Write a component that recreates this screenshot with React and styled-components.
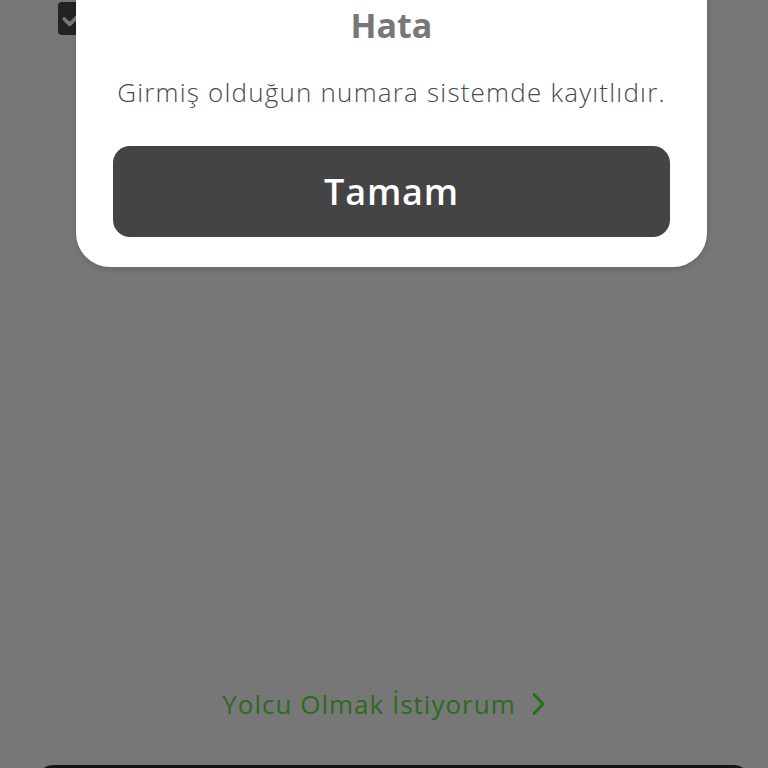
import React from "react";
import styled, { createGlobalStyle } from "styled-components";

const Global = createGlobalStyle`
  html, body { margin: 0; padding: 0; background: #fff; }
  body { font-family: "Open Sans", "Noto Sans", sans-serif; }
  #root { height: 768px; }
`;

const Page = styled.div`
  position: relative;
  width: 768px;
  height: 768px;
  overflow: hidden;
  background: #ffffff;
  display: flex;
  flex-direction: column;
`;

const TopRow = styled.div`
  display: flex;
  padding: 2px 0 0 58px;
`;

const Checkbox = styled.div`
  width: 34px;
  height: 33px;
  border-radius: 4px;
  background: #4a4a4a;
  display: flex;
  align-items: center;
  justify-content: flex-start;
  padding-left: 3px;
  box-sizing: border-box;
`;

const Spacer = styled.div`
  flex: 1;
`;

const LinkRow = styled.div`
  display: flex;
  justify-content: center;
  align-items: center;
  gap: 14px;
  color: #5ae83e;
  font-size: 26px;
  font-weight: 500;
  letter-spacing: 1px;
  margin-bottom: 43px;
`;

const BottomBar = styled.div`
  margin: 0 18px 0 37px;
  height: 40px;
  margin-bottom: -37px;
  border-radius: 16px;
  background: #2c2c2c;
`;

const Overlay = styled.div`
  position: absolute;
  inset: 0;
  background: rgba(0, 0, 0, 0.533);
`;

const Modal = styled.div`
  position: absolute;
  left: 76px;
  top: -32px;
  width: 631px;
  box-sizing: border-box;
  padding: 37px 37px 30px 37px;
  background: #ffffff;
  border-radius: 34px;
  box-shadow: 0 2px 6px rgba(0, 0, 0, 0.15);
  display: flex;
  flex-direction: column;
  align-items: center;
`;

const Title = styled.div`
  font-size: 34px;
  line-height: 41px;
  font-weight: 700;
  color: #777777;
`;

const Message = styled.div`
  margin-top: 29px;
  font-size: 26px;
  line-height: 34px;
  font-weight: 300;
  letter-spacing: 1.2px;
  color: #4a4a4a;
  white-space: nowrap;
`;

const Button = styled.button`
  margin-top: 37px;
  width: 100%;
  height: 91px;
  border: none;
  border-radius: 17px;
  background: #444444;
  color: #ffffff;
  font-family: "Open Sans", "Noto Sans", sans-serif;
  font-size: 36px;
  font-weight: 600;
  letter-spacing: 0.8px;
  cursor: pointer;
`;

export default function App() {
  return (
    <>
      <Global />
      <Page>
        <TopRow>
          <Checkbox>
            <svg width="26" height="26" viewBox="0 0 24 24" fill="none">
              <path d="M3 12l5 5L20 5" stroke="#fff" strokeWidth="3.4" strokeLinecap="round" strokeLinejoin="round" />
            </svg>
          </Checkbox>
        </TopRow>
        <Spacer />
        <LinkRow>
          <span>Yolcu Olmak İstiyorum</span>
          <svg width="16" height="24" viewBox="0 0 16 24" fill="none">
            <path d="M4 2.5l9 9.5-9 9.5" stroke="#5ae83e" strokeWidth="3" strokeLinecap="round" strokeLinejoin="round" />
          </svg>
        </LinkRow>
        <BottomBar />
        <Overlay />
        <Modal>
          <Title>Hata</Title>
          <Message>Girmiş olduğun numara sistemde kayıtlıdır.</Message>
          <Button>Tamam</Button>
        </Modal>
      </Page>
    </>
  );
}
